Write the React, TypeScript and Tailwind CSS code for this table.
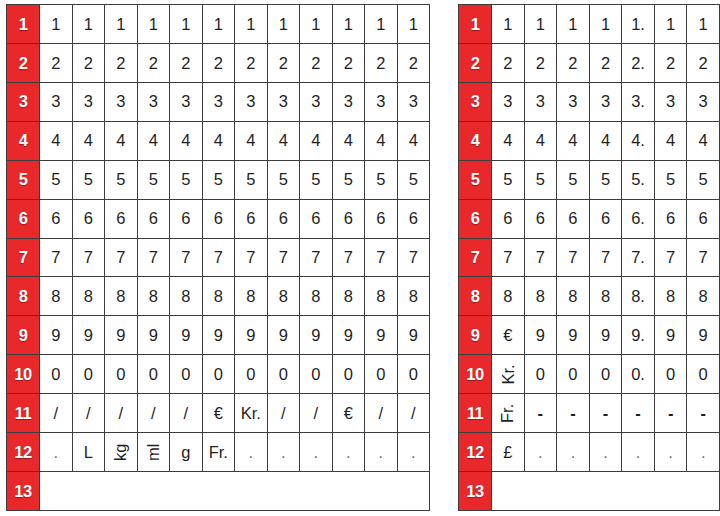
import React from 'react';

type Cell = string | { text: string; rotate?: boolean; faint?: boolean; bold?: boolean };

const digits = ['1', '2', '3', '4', '5', '6', '7', '8', '9', '0'];

const leftRows: Cell[][] = [
  ...digits.map(d => Array(12).fill(d) as Cell[]),
  ['/', '/', '/', '/', '/', '€', 'Kr.', '/', '/', '€', '/', '/'],
  [
    { text: '.', faint: true },
    'L',
    { text: 'kg', rotate: true },
    { text: 'ml', rotate: true },
    'g',
    'Fr.',
    ...Array(6).fill({ text: '.', faint: true }),
  ],
];

const rightRows: Cell[][] = [
  ...digits.slice(0, 8).map(d => [d, d, d, d, d + '.', d, d] as Cell[]),
  ['€', '9', '9', '9', '9.', '9', '9'],
  [{ text: 'Kr.', rotate: true }, '0', '0', '0', '0.', '0', '0'],
  [{ text: 'Fr.', rotate: true }, ...Array(6).fill({ text: '-', bold: true })],
  ['£', ...Array(6).fill({ text: '.', faint: true })],
];

function CellView({ cell }: { cell: Cell }) {
  const c = typeof cell === 'string' ? { text: cell } : cell;
  return (
    <div className="bg-white flex items-center justify-center text-[16.5px] text-[#1f1f1f]">
      <span
        className={`inline-block ${c.rotate ? '-rotate-90' : ''} ${c.faint ? 'text-[#6f6f6f]' : ''} ${
          c.bold ? 'font-bold' : ''
        }`}
      >
        {c.text}
      </span>
    </div>
  );
}

function Num({ n }: { n: number }) {
  return (
    <div className="bg-[#e8282b] flex items-center justify-center text-white font-bold text-[16.5px] tracking-[-0.5px] [text-shadow:0_1px_1px_rgba(0,0,0,0.35)]">
      {n}
    </div>
  );
}

function Sheet({ rows, cols, width }: { rows: Cell[][]; cols: number; width: string }) {
  return (
    <div
      className={`grid gap-px bg-[#3d3d3d] p-px h-[507px] ${width} ${
        cols === 12
          ? 'grid-cols-[32px_repeat(12,minmax(0,1fr))]'
          : 'grid-cols-[32px_repeat(7,minmax(0,1fr))]'
      } grid-rows-[repeat(13,minmax(0,1fr))]`}
    >
      {rows.map((row, i) => (
        <React.Fragment key={i}>
          <Num n={i + 1} />
          {row.map((cell, j) => (
            <CellView key={j} cell={cell} />
          ))}
        </React.Fragment>
      ))}
      <Num n={13} />
      <div className={`bg-white ${cols === 12 ? 'col-span-12' : 'col-span-7'}`} />
    </div>
  );
}

export default function App() {
  return (
    <main
      className="w-[720px] h-[516px] bg-white flex gap-[28px] pl-[6px] pt-[4px]"
      style={{ fontFamily: '"Liberation Sans", Arial, sans-serif' }}
    >
      <Sheet rows={leftRows} cols={12} width="w-[424px]" />
      <Sheet rows={rightRows} cols={7} width="w-[262px]" />
    </main>
  );
}
